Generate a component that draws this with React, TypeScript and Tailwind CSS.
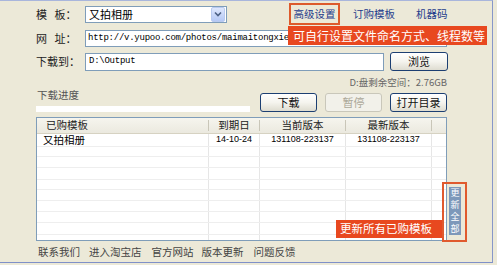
import React from "react";

function XpButton({ children, disabled, className = "" }: { children: React.ReactNode; disabled?: boolean; className?: string }) {
  return (
    <div
      className={
        "flex h-[19px] items-center justify-center rounded-[3px] border text-[11px] leading-none " +
        (disabled
          ? "border-[#c9c7ba] bg-[#f2f1ea] text-[#aca899] "
          : "border-[#1c3f72] bg-linear-to-b from-white via-[#f5f4ee] to-[#dedcd0] text-[#111] ") +
        className
      }
    >
      {children}
    </div>
  );
}

const rowLines = [13, 10, 11, 12, 11, 11, 11, 11, 12, 5];

export default function App() {
  return (
    <div className="h-[265px] w-[497px] overflow-hidden bg-[#ece9d8] font-['Noto_Sans_CJK_SC','Noto_Sans',sans-serif] text-[#222]">
      <div className="relative h-[263px] w-[493px] border-t border-r border-b border-t-[#a9b6dc] border-r-[#8797c9] border-b-[#7f90c8] pl-[36px] pt-[2px]">
        {/* Row 1 */}
        <div className="flex h-[22px] items-center">
          <div className="w-[49px] text-[11px] leading-none">模&nbsp;&nbsp;&nbsp;板：</div>
          <div className="flex h-[17px] w-[142px] items-center border border-[#7f9db9] bg-white pl-[3px]">
            <span className="flex-1 text-[11px] leading-none text-black">又拍相册</span>
            <div className="mr-px flex h-[15px] w-[14px] items-center justify-center rounded-[2px] border border-[#b9caf0] bg-linear-to-b from-[#dfe8fd] to-[#b5c8f5]">
              <svg width="8" height="6" viewBox="0 0 8 6">
                <path d="M1 1.5 L4 4.5 L7 1.5" fill="none" stroke="#4d6185" strokeWidth="1.6" />
              </svg>
            </div>
          </div>
          <div className="ml-[62px] flex h-[22px] w-[51px] items-center justify-center border-2 border-[#dd5a2c] text-[10.5px] leading-none text-[#1d3c8c]">
            高级设置
          </div>
          <div className="ml-[13px] text-[10.5px] leading-none text-[#1d3c8c]">订购模板</div>
          <div className="ml-[21px] text-[10.5px] leading-none text-[#1d3c8c]">机器码</div>
        </div>

        {/* Row 2 */}
        <div className="mt-[5px] flex h-[17px] items-center">
          <div className="w-[49px] text-[11px] leading-none">网&nbsp;&nbsp;&nbsp;址：</div>
          <div className="flex h-[17px] w-[362px] items-center border border-[#7f9db9] bg-white pl-[2px] font-['Liberation_Mono',monospace] text-[9px] tracking-[-0.25px] text-black">
            http://v.yupoo.com/photos/maimaitongxie
          </div>
        </div>

        {/* Row 3 */}
        <div className="mt-[5px] flex h-[19px] items-center">
          <div className="w-[49px] text-[11px] leading-none">下载到：</div>
          <div className="flex h-[18px] w-[299px] items-center border border-[#7f9db9] bg-white pl-[3px] font-['Liberation_Mono',monospace] text-[9px] tracking-[-0.25px] text-black">
            D:\Output
          </div>
          <XpButton className="ml-[6px] w-[58px]">浏览</XpButton>
        </div>

        {/* Disk space */}
        <div className="mt-[5px] flex w-[411px] justify-end text-[9.5px] leading-[12px] text-[#666]">
          D:盘剩余空间：2.76GB
        </div>

        {/* Progress row */}
        <div className="flex h-[24px] w-[411px]">
          <div className="flex w-[214px] flex-col">
            <div className="pl-[1px] pt-[1px] text-[10.5px] leading-[11px] text-[#555]">下载进度</div>
            <div className="mt-[6px] h-[8px] w-[214px] bg-white" />
          </div>
          <div className="ml-[10px] flex gap-[8px] pt-[5px]">
            <XpButton className="w-[57px]">下载</XpButton>
            <XpButton disabled className="w-[57px]">暂停</XpButton>
            <XpButton className="w-[57px]">打开目录</XpButton>
          </div>
        </div>

        {/* Table + update button */}
        <div className="mt-[5px] flex items-end">
          <div className="flex h-[124px] w-[411px] flex-col border border-[#7f9db9] bg-white">
            <div className="flex h-[16px] items-center border-b border-[#d6d2c2] bg-linear-to-b from-[#f6f5ee] to-[#ebe9df] text-[10.5px] leading-none text-[#222]">
              <div className="w-[172px] border-r border-[#c9c6b8] pl-[9px]">已购模板</div>
              <div className="w-[51px] border-r border-[#c9c6b8] text-center">到期日</div>
              <div className="w-[86px] border-r border-[#c9c6b8] text-center">当前版本</div>
              <div className="w-[86px] border-r border-[#c9c6b8] text-center">最新版本</div>
              <div className="flex-1" />
            </div>
            {rowLines.map((h, i) => (
              <div
                key={i}
                style={{ height: h }}
                className={"flex items-center text-black " + (i < rowLines.length - 1 ? "border-b border-[#eeeeee]" : "")}
              >
                <div className="flex h-full w-[172px] items-center border-r border-[#e6e6e6] pl-[6px] text-[10.5px] leading-none">
                  {i === 0 ? "又拍相册" : ""}
                </div>
                <div className="flex h-full w-[51px] items-center justify-center border-r border-[#e6e6e6] font-['Liberation_Sans',sans-serif] text-[9px] leading-none">
                  {i === 0 ? "14-10-24" : ""}
                </div>
                <div className="flex h-full w-[86px] items-center justify-center border-r border-[#e6e6e6] font-['Liberation_Sans',sans-serif] text-[9px] leading-none">
                  {i === 0 ? "131108-223137" : ""}
                </div>
                <div className="flex h-full w-[86px] items-center justify-center border-r border-[#e6e6e6] font-['Liberation_Sans',sans-serif] text-[9px] leading-none">
                  {i === 0 ? "131108-223137" : ""}
                </div>
                <div className="flex-1" />
              </div>
            ))}
          </div>
          <div className="mb-[6px] ml-[2px] flex h-[48px] w-[12px] flex-col items-center justify-center bg-[#7d98ba] text-[9px] text-white">
            <span className="block h-[12px] leading-[12px]">更</span>
            <span className="block h-[12px] leading-[12px]">新</span>
            <span className="block h-[12px] leading-[12px]">全</span>
            <span className="block h-[12px] leading-[12px]">部</span>
          </div>
        </div>

        {/* Footer links */}
        <div className="mt-[4px] flex pl-[2px] text-[10.5px] leading-[13px] text-[#444]">
          <span>联系我们</span>
          <span className="ml-[9px]">进入淘宝店</span>
          <span className="ml-[10px]">官方网站</span>
          <span className="ml-[8px]">版本更新</span>
          <span className="ml-[10px]">问题反馈</span>
        </div>

        {/* Overlays */}
        <div className="absolute left-[288px] top-[25px] flex h-[19px] w-[199px] items-center bg-[#e8481f] pl-[5px] text-[12px] leading-none text-white">
          可自行设置文件命名方式、线程数等
        </div>
        <div className="absolute left-[336px] top-[219px] flex h-[18px] w-[106px] items-center bg-[#e8481f] pl-[4px] text-[11.5px] leading-none text-white">
          更新所有已购模板
        </div>
        <div className="absolute left-[442px] top-[181px] h-[60px] w-[25px] border-2 border-[#e05a2e]" />
      </div>
    </div>
  );
}
